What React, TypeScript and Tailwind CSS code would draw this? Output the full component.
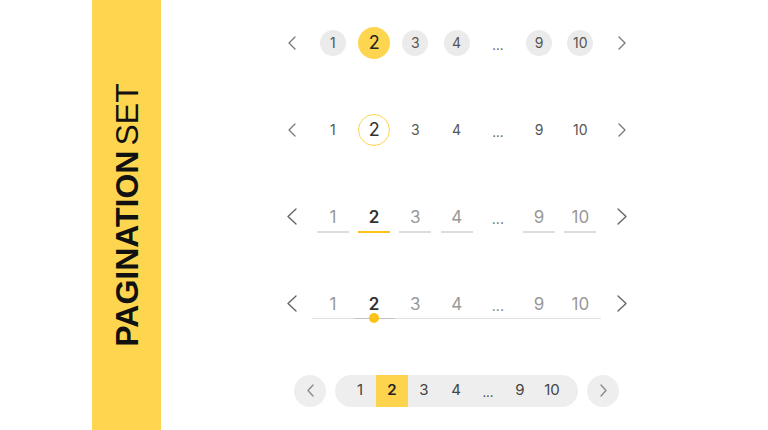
import React from "react";

const pages = ["1", "2", "3", "4", "...", "9", "10"];

function Chev({ dir, w, h, sw, color }: { dir: "l" | "r"; w: number; h: number; sw: number; color: string }) {
  const d = dir === "l" ? `M${w - 1} 1 L1 ${h / 2} L${w - 1} ${h - 1}` : `M1 1 L${w - 1} ${h / 2} L1 ${h - 1}`;
  return (
    <svg width={w} height={h} viewBox={`0 0 ${w} ${h}`} fill="none">
      <path d={d} stroke={color} strokeWidth={sw} strokeLinecap="round" strokeLinejoin="round" />
    </svg>
  );
}

function Row1() {
  return (
    <div className="flex h-[87px] shrink-0 items-center">
      <div className="flex w-[41.25px] justify-center">
        <Chev dir="l" w={8} h={14} sw={1.3} color="#777" />
      </div>
      {pages.map((p) => (
        <div key={p} className="flex w-[41.25px] justify-center">
          {p === "..." ? (
            <span className="pt-[6px] text-[13px] text-[#666]">...</span>
          ) : p === "2" ? (
            <div className="flex h-[32px] w-[32px] items-center justify-center rounded-full bg-[#FDD54F] text-[18px] text-[#222]">
              2
            </div>
          ) : (
            <div className="flex h-[26px] w-[26px] items-center justify-center rounded-full bg-[#EBEBEB] text-[14px] text-[#555]">
              {p}
            </div>
          )}
        </div>
      ))}
      <div className="flex w-[41.25px] justify-center">
        <Chev dir="r" w={8} h={14} sw={1.3} color="#777" />
      </div>
    </div>
  );
}

function Row2() {
  return (
    <div className="flex h-[87px] shrink-0 items-center">
      <div className="flex w-[41.25px] justify-center">
        <Chev dir="l" w={8} h={14} sw={1.3} color="#777" />
      </div>
      {pages.map((p) => (
        <div key={p} className="flex w-[41.25px] justify-center">
          {p === "..." ? (
            <span className="pt-[6px] text-[13px] text-[#666]">...</span>
          ) : p === "2" ? (
            <div className="flex h-[32px] w-[32px] items-center justify-center rounded-full border-[1.5px] border-[#FDD54F] text-[18px] text-[#333]">
              2
            </div>
          ) : (
            <div className="flex h-[26px] w-[26px] items-center justify-center text-[14px] text-[#555]">{p}</div>
          )}
        </div>
      ))}
      <div className="flex w-[41.25px] justify-center">
        <Chev dir="r" w={8} h={14} sw={1.3} color="#777" />
      </div>
    </div>
  );
}

function Row3() {
  return (
    <div className="flex h-[87px] shrink-0 items-center">
      <div className="flex w-[41.25px] justify-center">
        <Chev dir="l" w={10} h={17} sw={1.4} color="#666" />
      </div>
      {pages.map((p) => (
        <div key={p} className="flex w-[41.25px] flex-col items-center pt-[6px]">
          <span
            className={
              p === "2"
                ? "h-[20px] text-[17px] leading-[20px] font-semibold text-[#333]"
                : p === "..."
                ? "h-[20px] text-[14px] leading-[24px] text-[#666]"
                : "h-[20px] text-[17px] leading-[20px] text-[#999]"
            }
          >
            {p}
          </span>
          <div
            className={
              p === "..."
                ? "mt-[4px] h-[2px] w-[32px]"
                : p === "2"
                ? "mt-[4px] h-[2px] w-[32px] bg-[#FCC419]"
                : "mt-[4px] h-[2px] w-[32px] bg-[#DDDDDD]"
            }
          />
        </div>
      ))}
      <div className="flex w-[41.25px] justify-center">
        <Chev dir="r" w={10} h={17} sw={1.4} color="#666" />
      </div>
    </div>
  );
}

function Row4() {
  return (
    <div className="flex h-[87px] shrink-0 items-center">
      <div className="flex w-[41.25px] justify-center">
        <Chev dir="l" w={10} h={17} sw={1.4} color="#666" />
      </div>
      {pages.map((p) => (
        <div key={p} className="flex w-[41.25px] flex-col items-center pt-[5px]">
          <span
            className={
              p === "2"
                ? "h-[20px] text-[17px] leading-[20px] font-semibold text-[#333]"
                : p === "..."
                ? "h-[20px] text-[14px] leading-[24px] text-[#777]"
                : "h-[20px] text-[17px] leading-[20px] text-[#999]"
            }
          >
            {p}
          </span>
          <div className={p === "2" ? "relative mt-[4px] h-px w-full bg-[#C4C4C4]" : "mt-[4px] h-px w-full bg-[#E2E2E2]"}>
            {p === "2" && (
              <div className="absolute left-1/2 top-1/2 h-[10px] w-[10px] -translate-x-1/2 -translate-y-1/2 rounded-full bg-[#FCC419]" />
            )}
          </div>
        </div>
      ))}
      <div className="flex w-[41.25px] justify-center">
        <Chev dir="r" w={10} h={17} sw={1.4} color="#666" />
      </div>
    </div>
  );
}

function Row5() {
  return (
    <div className="flex h-[87px] shrink-0 items-center pl-[23px]">
      <div className="flex h-[32px] w-[32px] items-center justify-center rounded-full bg-[#EEEEEE]">
        <Chev dir="l" w={7} h={13} sw={1.3} color="#888" />
      </div>
      <div className="ml-[9px] flex h-[32px] items-stretch rounded-full bg-[#EEEEEE] pl-[9px] pr-[10px]">
        {pages.map((p) => (
          <div
            key={p}
            className={
              p === "2"
                ? "flex w-[32px] items-center justify-center bg-[#FED44E] text-[15px] font-semibold text-[#222]"
                : p === "..."
                ? "flex w-[32px] items-center justify-center pt-[5px] text-[13px] text-[#555]"
                : "flex w-[32px] items-center justify-center text-[15px] text-[#444]"
            }
          >
            {p}
          </div>
        ))}
      </div>
      <div className="ml-[9px] flex h-[32px] w-[32px] items-center justify-center rounded-full bg-[#EEEEEE]">
        <Chev dir="r" w={7} h={13} sw={1.3} color="#888" />
      </div>
    </div>
  );
}

export default function App() {
  return (
    <div className="flex h-[430px] w-[768px] overflow-hidden bg-white font-['Inter',sans-serif]">
      <div className="ml-[92px] flex h-full w-[69px] shrink-0 items-center justify-center bg-[#FED54F]">
        <div className="-rotate-90 whitespace-nowrap font-['Liberation_Sans',Arial,sans-serif] text-[32px] leading-none text-[#111]">
          <span className="font-bold">PAGINATION</span>
          <span className="ml-[5px] font-normal">SET</span>
        </div>
      </div>
      <div className="ml-[110px] mt-[-1px] flex flex-col">
        <Row1 />
        <Row2 />
        <Row3 />
        <Row4 />
        <Row5 />
      </div>
    </div>
  );
}
